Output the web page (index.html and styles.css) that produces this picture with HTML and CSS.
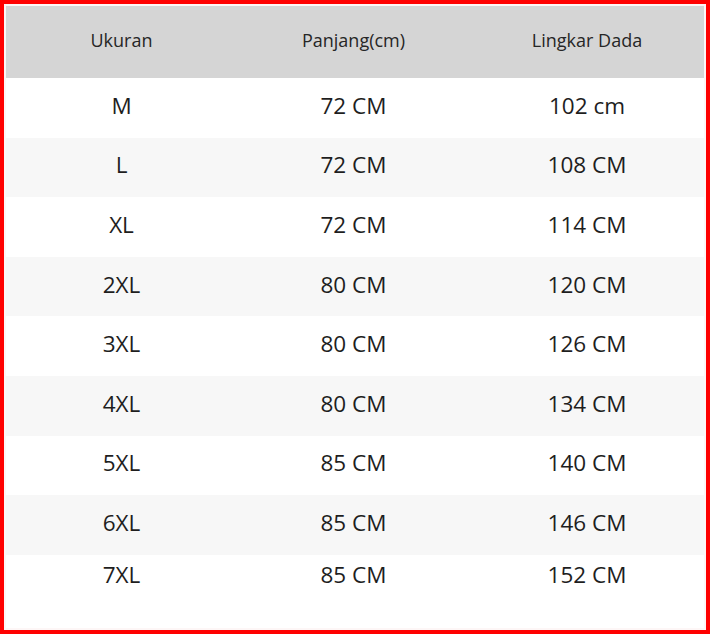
FILE: index.html
```html
<!DOCTYPE html>
<html>
<head>
<meta charset="utf-8">
<link rel="stylesheet" href="styles.css">
</head>
<body>
<div class="frame">
  <div class="table">
    <div class="row head"><div>Ukuran</div><div>Panjang(cm)</div><div>Lingkar Dada</div></div>
    <div class="row"><div>M</div><div>72 CM</div><div>102 cm</div></div>
    <div class="row alt"><div>L</div><div>72 CM</div><div>108 CM</div></div>
    <div class="row"><div>XL</div><div>72 CM</div><div>114 CM</div></div>
    <div class="row alt"><div>2XL</div><div>80 CM</div><div>120 CM</div></div>
    <div class="row"><div>3XL</div><div>80 CM</div><div>126 CM</div></div>
    <div class="row alt"><div>4XL</div><div>80 CM</div><div>134 CM</div></div>
    <div class="row"><div>5XL</div><div>85 CM</div><div>140 CM</div></div>
    <div class="row alt"><div>6XL</div><div>85 CM</div><div>146 CM</div></div>
    <div class="row last"><div>7XL</div><div>85 CM</div><div>152 CM</div></div>
  </div>
</div>
</body>
</html>
```

FILE: styles.css
```css
html, body {
  margin: 0;
  padding: 0;
  background: #fff;
}
.frame {
  box-sizing: border-box;
  width: 710px;
  height: 634px;
  border: 4px solid #ff0000;
  padding: 2px;
  background: #fdf6f6;
}
.table {
  display: flex;
  flex-direction: column;
  height: 100%;
  background: #fff;
  font-family: "Open Sans", "Noto Sans", sans-serif;
  color: #1e1e1e;
}
.row {
  box-sizing: border-box;
  display: grid;
  grid-template-columns: 231px 233px 234px;
  align-items: center;
  justify-items: center;
  height: 59.6px;
  padding-bottom: 5px;
  font-size: 22.5px;
  line-height: 1.2;
  background: #fff;
}
.row.alt {
  background: #f7f7f7;
}
.row.head {
  height: 72px;
  padding-bottom: 2px;
  background: #d5d5d5;
  font-size: 18px;
  color: #262626;
}
.row.last {
  flex: 1;
  align-items: start;
  padding-top: 6px;
  padding-bottom: 0;
}
```
